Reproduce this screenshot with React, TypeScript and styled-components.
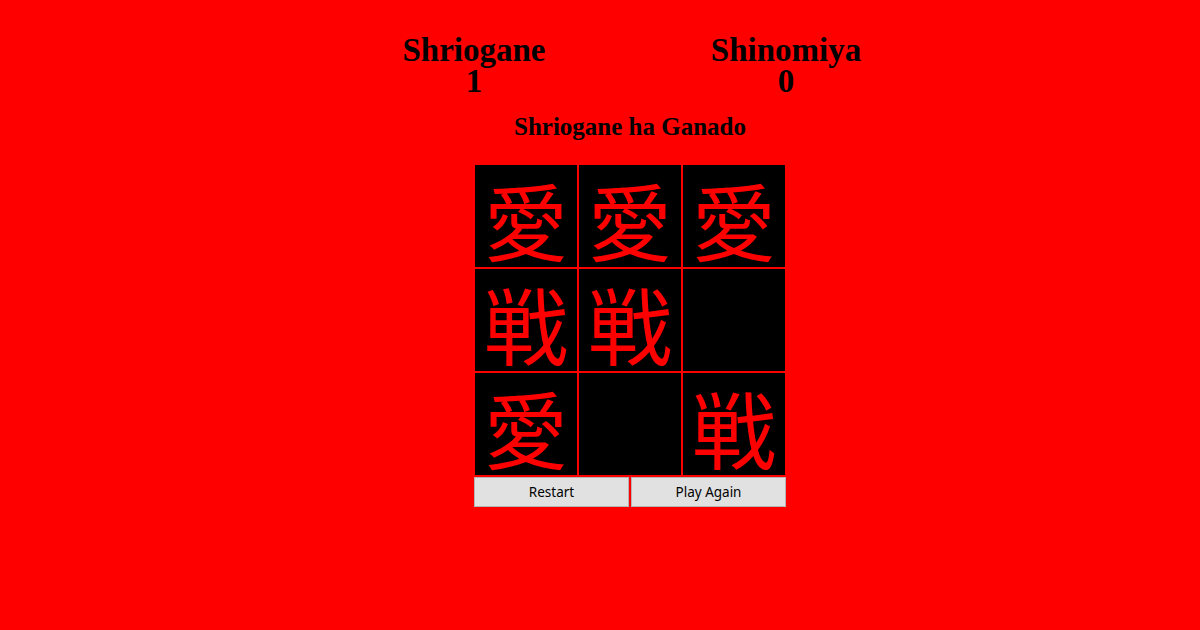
import React from "react";
import styled, { createGlobalStyle } from "styled-components";

const Global = createGlobalStyle`
  html, body { margin: 0; padding: 0; background: #ff0000; }
  body { font-family: "Liberation Serif", serif; }
`;

const Page = styled.div`
  width: 1200px;
  height: 630px;
  background: #ff0000;
  display: flex;
  flex-direction: column;
  align-items: center;
  padding: 35px 0 0 60px;
  box-sizing: border-box;
`;

const Scoreboard = styled.div`
  display: grid;
  grid-template-columns: 312px 312px;
  width: 624px;
`;

const Player = styled.div`
  display: flex;
  flex-direction: column;
  align-items: center;
  font-family: "Liberation Serif", serif;
  font-weight: bold;
  font-size: 33px;
  line-height: 31px;
  color: #000;
`;

const Status = styled.h2`
  margin: 15px 0 0;
  font-family: "Liberation Serif", serif;
  font-weight: bold;
  font-size: 25px;
  line-height: 29px;
  color: #000;
`;

const Board = styled.div`
  margin-top: 23px;
  display: grid;
  grid-template-columns: repeat(3, 104px);
  grid-template-rows: repeat(3, 104px);
`;

const Cell = styled.div`
  box-sizing: border-box;
  border: 1px solid #ff0000;
  background: #000;
  color: #ff0000;
  display: flex;
  align-items: center;
  justify-content: center;
  font-family: "Noto Sans CJK JP", "Noto Sans CJK SC", sans-serif;
  font-size: 84px;
  line-height: 84px;
  padding-top: 5px;
`;

const Controls = styled.div`
  margin-top: 1px;
  display: grid;
  grid-template-columns: 155px 155px;
  column-gap: 2px;
`;

const Button = styled.button`
  height: 30px;
  margin: 0;
  padding: 0;
  box-sizing: border-box;
  border: 1px solid #b5b5b5;
  background: #e1e1e1;
  color: #000;
  font-family: "Noto Sans", "Open Sans", sans-serif;
  font-size: 13.5px;
  line-height: 18px;
  cursor: pointer;
`;

const cells = ["愛", "愛", "愛", "戦", "戦", "", "愛", "", "戦"];

export default function App() {
  return (
    <>
      <Global />
      <Page>
        <Scoreboard>
          <Player>
            <span>Shriogane</span>
            <span>1</span>
          </Player>
          <Player>
            <span>Shinomiya</span>
            <span>0</span>
          </Player>
        </Scoreboard>
        <Status>Shriogane ha Ganado</Status>
        <Board>
          {cells.map((c, i) => (
            <Cell key={i}>{c}</Cell>
          ))}
        </Board>
        <Controls>
          <Button>Restart</Button>
          <Button>Play Again</Button>
        </Controls>
      </Page>
    </>
  );
}
